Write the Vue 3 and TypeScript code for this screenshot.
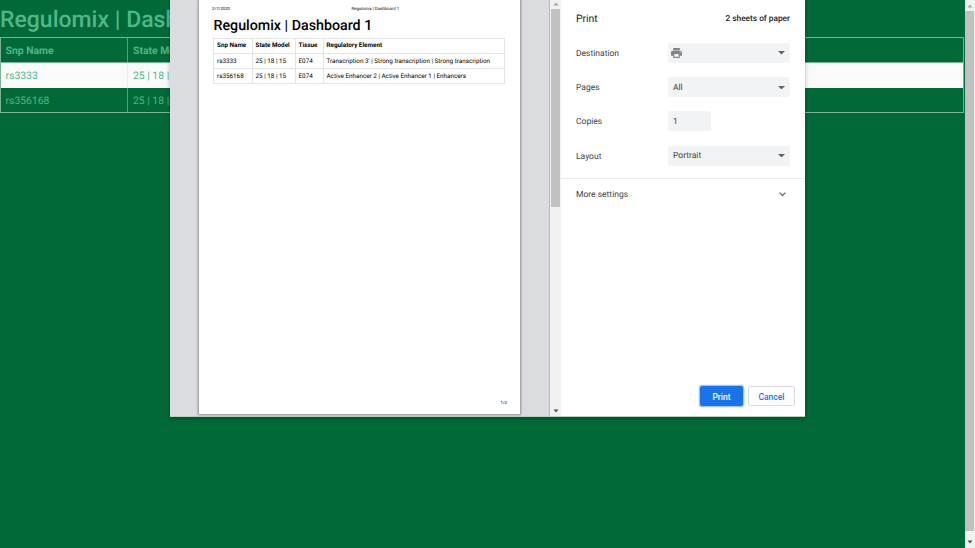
<script setup lang="ts">
interface SnpRow {
  name: string
  model: string
  tissue: string
  element: string
}

interface Setting {
  label: string
  kind: 'destination' | 'select' | 'number'
  value: string
}

const title = 'Regulomix | Dashboard 1'
const headers: string[] = ['Snp Name', 'State Model', 'Tissue', 'Regulatory Element']
const rows: SnpRow[] = [
  {
    name: 'rs3333',
    model: '25 | 18 | 15',
    tissue: 'E074',
    element: "Transcription 3' | Strong transcription | Strong transcription",
  },
  {
    name: 'rs356168',
    model: '25 | 18 | 15',
    tissue: 'E074',
    element: 'Active Enhancer 2 | Active Enhancer 1 | Enhancers',
  },
]
const settings: Setting[] = [
  { label: 'Destination', kind: 'destination', value: '' },
  { label: 'Pages', kind: 'select', value: 'All' },
  { label: 'Copies', kind: 'number', value: '1' },
  { label: 'Layout', kind: 'select', value: 'Portrait' },
]
</script>

<template>
  <div class="screen">
    <main class="page">
      <h1 class="page-title">{{ title }}</h1>
      <div class="page-table">
        <div class="page-row head">
          <span v-for="h in headers.slice(0, 2)" :key="h">{{ h }}</span>
        </div>
        <div v-for="(r, i) in rows" :key="r.name" class="page-row" :class="{ light: i === 0 }">
          <span>{{ r.name }}</span>
          <span>{{ r.model }}</span>
        </div>
      </div>
    </main>
    <div class="scrollbar window-bar">
      <svg class="arrow up" viewBox="0 0 6 4"><path d="M0.5 3.5L3 0.5L5.5 3.5Z" /></svg>
      <div class="thumb"></div>
      <svg class="arrow" viewBox="0 0 6 4"><path d="M0.5 0.5L3 3.5L5.5 0.5Z" /></svg>
    </div>

    <section class="dialog">
      <div class="preview">
        <article class="sheet">
          <header class="sheet-head">
            <span class="sheet-date">2/7/2020</span>
            <span>{{ title }}</span>
          </header>
          <h2 class="sheet-title">{{ title }}</h2>
          <div class="sheet-table">
            <div class="sheet-row bold">
              <span v-for="h in headers" :key="h">{{ h }}</span>
            </div>
            <div v-for="r in rows" :key="r.name" class="sheet-row">
              <span>{{ r.name }}</span>
              <span>{{ r.model }}</span>
              <span>{{ r.tissue }}</span>
              <span>{{ r.element }}</span>
            </div>
          </div>
          <footer class="sheet-foot">1/2</footer>
        </article>
      </div>
      <div class="scrollbar preview-bar">
        <svg class="arrow up" viewBox="0 0 6 4"><path d="M0.5 3.5L3 0.5L5.5 3.5Z" /></svg>
        <div class="thumb"></div>
        <svg class="arrow" viewBox="0 0 6 4"><path d="M0.5 0.5L3 3.5L5.5 0.5Z" /></svg>
      </div>
      <aside class="panel">
        <header class="panel-head">
          <span class="panel-title">Print</span>
          <span class="sheets">2 sheets of paper</span>
        </header>
        <div class="settings">
          <div v-for="s in settings" :key="s.label" class="setting">
            <label>{{ s.label }}</label>
            <div class="control" :class="s.kind">
              <svg v-if="s.kind === 'destination'" class="printer-icon" viewBox="2 3 20 18">
                <path d="M19 8H5c-1.66 0-3 1.34-3 3v6h4v4h12v-4h4v-6c0-1.66-1.34-3-3-3zm-3 11H8v-5h8v5zm3-7c-.55 0-1-.45-1-1s.45-1 1-1 1 .45 1 1-.45 1-1 1zm-1-9H6v4h12V3z" />
              </svg>
              <span v-else>{{ s.value }}</span>
              <svg v-if="s.kind !== 'number'" class="caret" viewBox="0 0 6 3"><path d="M0 0H6L3 3Z" /></svg>
            </div>
          </div>
        </div>
        <div class="more">
          <span>More settings</span>
          <svg class="chevron" viewBox="0 0 7 5"><path d="M0.6 0.7L3.5 3.6L6.4 0.7" /></svg>
        </div>
        <footer class="actions">
          <button type="button" class="btn primary">Print</button>
          <button type="button" class="btn">Cancel</button>
        </footer>
      </aside>
    </section>
  </div>
</template>

<style>
body {
  margin: 0;
  overflow: hidden;
}
</style>

<style scoped>
.screen {
  position: relative;
  display: flex;
  width: 975px;
  height: 548px;
  overflow: hidden;
  background: #006937;
  font-family: Roboto, 'Liberation Sans', sans-serif;
  text-rendering: geometricPrecision;
}
.screen * {
  box-sizing: border-box;
}
.page {
  width: 965px;
  color: #4db887;
}
.page-title {
  margin: 0;
  height: 37px;
  padding-top: 5px;
  font-size: 23px;
  line-height: 30px;
  font-weight: 500;
  white-space: nowrap;
}
.page-table {
  width: 964px;
  height: 76px;
  border: 1px solid #78b397;
  display: grid;
  grid-template-rows: 25px 25px 24px;
}
.page-row {
  display: grid;
  grid-template-columns: 126px 1fr;
  font-size: 10.4px;
  line-height: 26px;
}
.page-row span {
  height: 100%;
  padding-left: 5px;
  border-left: 1px solid #55a17a;
  overflow: hidden;
  white-space: nowrap;
}
.page-row span:first-child {
  padding-left: 4.5px;
  border-left: 0;
}
.page-row.head {
  font-weight: 700;
  line-height: 25px;
  border-bottom: 1px solid #78b397;
}
.page-row.light {
  background: #fafafa;
}
.page-row.light span {
  border-color: #eaeeec;
}
.scrollbar {
  display: flex;
  flex-direction: column;
  align-items: center;
  flex: none;
  background: #f1f1f1;
}
.arrow {
  width: 6px;
  height: 4px;
  flex: none;
  fill: #505050;
}
.arrow.up {
  fill: #a3a3a3;
}
.thumb {
  width: 9px;
  background: #c1c1c1;
}
.window-bar {
  width: 10px;
  height: 548px;
  padding: 4px 1px 4px 0;
}
.window-bar .thumb {
  height: 520px;
  margin: 3px 0 auto;
}
.dialog {
  position: absolute;
  left: 170px;
  top: 0;
  display: flex;
  width: 635px;
  height: 417px;
  background: #fff;
  border-bottom: 1px solid #b6cdc0;
  box-shadow: 0 1px 4px rgba(0, 0, 0, 0.3);
}
.preview {
  width: 380px;
  height: 416px;
  padding-left: 29px;
  background: #dadce0;
  border-right: 1px solid #b6b7ba;
}
.sheet {
  display: flex;
  flex-direction: column;
  width: 321px;
  height: 414px;
  padding: 0 13px 0 14px;
  background: #fff;
  color: #000;
  box-shadow: 0 0 2px 1px rgba(0, 0, 0, 0.35);
}
.sheet-head {
  display: flex;
  height: 18px;
  padding-top: 7px;
  font-size: 4.3px;
  line-height: 6px;
  white-space: nowrap;
}
.sheet-date {
  width: 139.5px;
  margin-left: -1px;
}
.sheet-title {
  margin: 0 0 0 0.5px;
  height: 20px;
  font-size: 14.25px;
  line-height: 17px;
  font-weight: 500;
  white-space: nowrap;
}
.sheet-table {
  display: grid;
  grid-template-rows: 15px 15px 15px;
  width: 292px;
  border: 1px solid #e2e4e6;
  border-bottom-width: 0;
}
.sheet-row {
  display: grid;
  grid-template-columns: 38.5px 43px 28px 1fr;
  font-size: 6.32px;
  line-height: 14px;
  border-bottom: 1px solid #e2e4e6;
}
.sheet-row span {
  padding-left: 3px;
  border-right: 1px solid #e2e4e6;
  white-space: nowrap;
}
.sheet-row span:last-child {
  border-right: 0;
}
.sheet-row.bold {
  line-height: 12px;
  font-weight: 700;
}
.sheet-foot {
  margin-top: auto;
  padding-bottom: 7px;
  text-align: right;
  font-size: 4.3px;
  line-height: 6px;
}
.preview-bar {
  width: 11px;
  height: 416px;
  padding: 2px 0 3px;
}
.preview-bar .thumb {
  margin-top: 3px;
  margin-bottom: auto;
  height: 198px;
}
.panel {
  display: flex;
  flex-direction: column;
  width: 244px;
  height: 416px;
  color: #3c4043;
  font-size: 8.5px;
}
.panel-head {
  display: flex;
  align-items: center;
  justify-content: space-between;
  height: 36px;
  padding: 1px 15px 0;
}
.panel-title {
  font-size: 10.4px;
  color: #202124;
}
.sheets {
  padding-top: 1px;
  font-size: 8.3px;
  font-weight: 500;
  color: #202124;
}
.settings {
  height: 143px;
  border-bottom: 1px solid #e8eaed;
}
.setting {
  display: flex;
  align-items: center;
  height: 34.2px;
  padding-left: 15px;
}
.setting label {
  width: 92px;
  padding-top: 2px;
}
.control {
  display: flex;
  align-items: center;
  width: 122px;
  height: 20px;
  padding: 0 5px;
  border-radius: 2px;
  background: #f1f3f4;
}
.control span {
  padding-top: 1px;
}
.control.number {
  width: 43px;
}
.printer-icon {
  width: 11px;
  height: 10px;
  margin-left: -2px;
  fill: #80868b;
}
.caret {
  width: 7px;
  height: 3.5px;
  margin-left: auto;
  fill: #5f6368;
}
.more {
  display: flex;
  align-items: center;
  justify-content: space-between;
  height: 30px;
  padding: 0 19px 0 15px;
}
.more span {
  padding-top: 2px;
}
.chevron {
  width: 7px;
  height: 5px;
  fill: none;
  stroke: #5f6368;
  stroke-width: 1.2;
}
.actions {
  display: flex;
  justify-content: flex-end;
  gap: 5px;
  margin-top: auto;
  padding: 0 10px 10px 0;
}
.btn {
  width: 47px;
  height: 20px;
  padding: 1px 0 0;
  border: 1px solid #dadce0;
  border-radius: 2px;
  background: #fff;
  color: #1a73e8;
  font-family: inherit;
  font-size: 8.5px;
  font-weight: 500;
}
.btn.primary {
  width: 43px;
  border-color: #1a73e8;
  background: #1a73e8;
  color: #fff;
  box-shadow: 0 0 0 1.3px #a5c5f4;
}
</style>
